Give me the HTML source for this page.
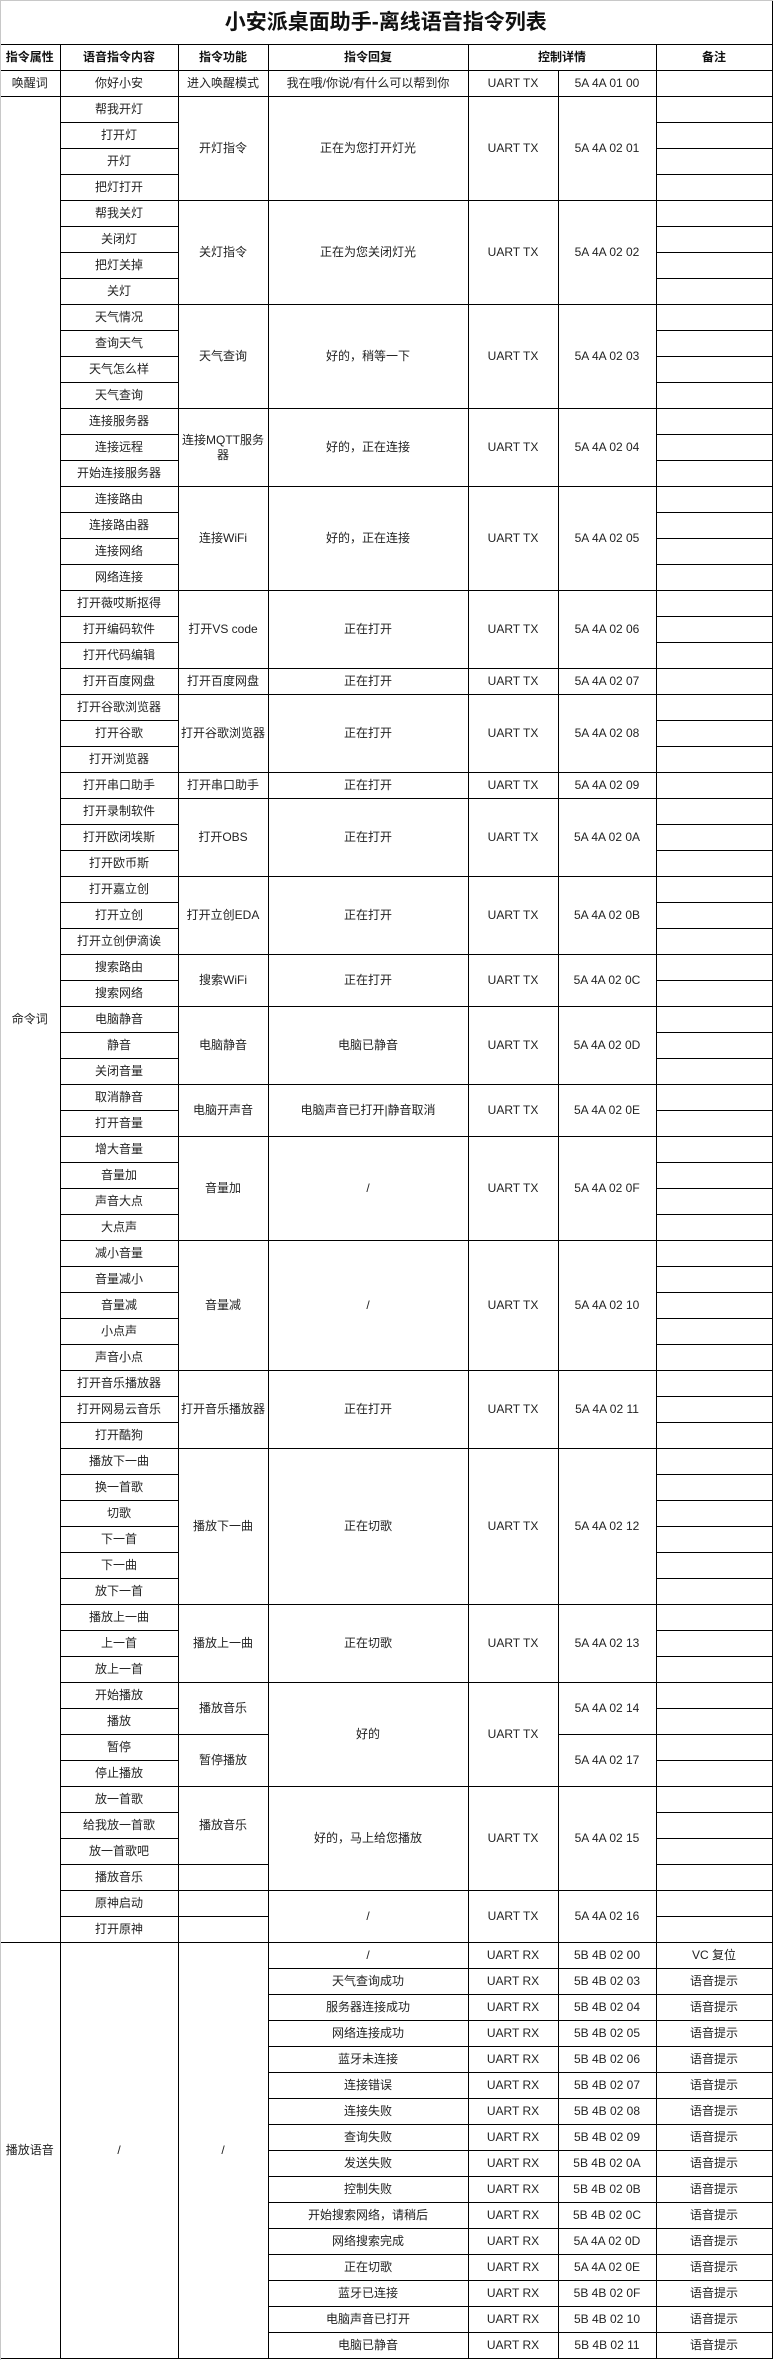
<!DOCTYPE html>
<html><head><meta charset="utf-8">
<style>
html,body{margin:0;padding:0;background:#fff;}
body{width:773px;height:2360px;overflow:hidden;position:relative;}
.lb{position:absolute;left:0;top:0;width:1px;height:2360px;background:#c8c8c8;}
.tb{position:absolute;left:0;top:0;width:773px;height:1px;background:#c8c8c8;}
table{position:absolute;left:0;top:0;border-collapse:collapse;table-layout:fixed;width:772px;
font-family:"Liberation Sans","Noto Sans CJK SC",sans-serif;font-size:12px;color:#222;}
td{border:1px solid #000;height:25px;padding:0 2px;text-align:center;vertical-align:middle;line-height:15px;overflow:hidden;}
tr{height:26px;}
.title td{height:44px;border-top:none;border-left:none;font-size:21px;font-weight:bold;color:#111;}
.h td{font-weight:bold;color:#111;}
td.f{border-left:none;}
</style></head><body>
<table>
<colgroup><col style="width:60px"><col style="width:118px"><col style="width:90px"><col style="width:200px"><col style="width:90px"><col style="width:98px"><col style="width:116px"></colgroup>
<tr class="title"><td colspan="7" style="border-right:1px solid #000">小安派桌面助手-离线语音指令列表</td></tr>
<tr class="h"><td class="f">指令属性</td><td>语音指令内容</td><td>指令功能</td><td>指令回复</td><td colspan="2">控制详情</td><td>备注</td></tr>
<tr><td class="f">唤醒词</td><td>你好小安</td><td>进入唤醒模式</td><td>我在哦/你说/有什么可以帮到你</td><td>UART TX</td><td>5A 4A 01 00</td><td></td></tr>

<tr><td class="f" rowspan="71">命令词</td><td>帮我开灯</td><td rowspan="4">开灯指令</td><td rowspan="4">正在为您打开灯光</td><td rowspan="4">UART TX</td><td rowspan="4">5A 4A 02 01</td><td></td></tr>
<tr><td>打开灯</td><td></td></tr><tr><td>开灯</td><td></td></tr><tr><td>把灯打开</td><td></td></tr>

<tr><td>帮我关灯</td><td rowspan="4">关灯指令</td><td rowspan="4">正在为您关闭灯光</td><td rowspan="4">UART TX</td><td rowspan="4">5A 4A 02 02</td><td></td></tr>
<tr><td>关闭灯</td><td></td></tr><tr><td>把灯关掉</td><td></td></tr><tr><td>关灯</td><td></td></tr>

<tr><td>天气情况</td><td rowspan="4">天气查询</td><td rowspan="4">好的，稍等一下</td><td rowspan="4">UART TX</td><td rowspan="4">5A 4A 02 03</td><td></td></tr>
<tr><td>查询天气</td><td></td></tr><tr><td>天气怎么样</td><td></td></tr><tr><td>天气查询</td><td></td></tr>

<tr><td>连接服务器</td><td rowspan="3">连接MQTT服务器</td><td rowspan="3">好的，正在连接</td><td rowspan="3">UART TX</td><td rowspan="3">5A 4A 02 04</td><td></td></tr>
<tr><td>连接远程</td><td></td></tr><tr><td>开始连接服务器</td><td></td></tr>

<tr><td>连接路由</td><td rowspan="4">连接WiFi</td><td rowspan="4">好的，正在连接</td><td rowspan="4">UART TX</td><td rowspan="4">5A 4A 02 05</td><td></td></tr>
<tr><td>连接路由器</td><td></td></tr><tr><td>连接网络</td><td></td></tr><tr><td>网络连接</td><td></td></tr>

<tr><td>打开薇哎斯抠得</td><td rowspan="3">打开VS code</td><td rowspan="3">正在打开</td><td rowspan="3">UART TX</td><td rowspan="3">5A 4A 02 06</td><td></td></tr>
<tr><td>打开编码软件</td><td></td></tr><tr><td>打开代码编辑</td><td></td></tr>

<tr><td>打开百度网盘</td><td>打开百度网盘</td><td>正在打开</td><td>UART TX</td><td>5A 4A 02 07</td><td></td></tr>

<tr><td>打开谷歌浏览器</td><td rowspan="3">打开谷歌浏览器</td><td rowspan="3">正在打开</td><td rowspan="3">UART TX</td><td rowspan="3">5A 4A 02 08</td><td></td></tr>
<tr><td>打开谷歌</td><td></td></tr><tr><td>打开浏览器</td><td></td></tr>

<tr><td>打开串口助手</td><td>打开串口助手</td><td>正在打开</td><td>UART TX</td><td>5A 4A 02 09</td><td></td></tr>

<tr><td>打开录制软件</td><td rowspan="3">打开OBS</td><td rowspan="3">正在打开</td><td rowspan="3">UART TX</td><td rowspan="3">5A 4A 02 0A</td><td></td></tr>
<tr><td>打开欧闭埃斯</td><td></td></tr><tr><td>打开欧币斯</td><td></td></tr>

<tr><td>打开嘉立创</td><td rowspan="3">打开立创EDA</td><td rowspan="3">正在打开</td><td rowspan="3">UART TX</td><td rowspan="3">5A 4A 02 0B</td><td></td></tr>
<tr><td>打开立创</td><td></td></tr><tr><td>打开立创伊滴诶</td><td></td></tr>

<tr><td>搜索路由</td><td rowspan="2">搜索WiFi</td><td rowspan="2">正在打开</td><td rowspan="2">UART TX</td><td rowspan="2">5A 4A 02 0C</td><td></td></tr>
<tr><td>搜索网络</td><td></td></tr>

<tr><td>电脑静音</td><td rowspan="3">电脑静音</td><td rowspan="3">电脑已静音</td><td rowspan="3">UART TX</td><td rowspan="3">5A 4A 02 0D</td><td></td></tr>
<tr><td>静音</td><td></td></tr><tr><td>关闭音量</td><td></td></tr>

<tr><td>取消静音</td><td rowspan="2">电脑开声音</td><td rowspan="2">电脑声音已打开|静音取消</td><td rowspan="2">UART TX</td><td rowspan="2">5A 4A 02 0E</td><td></td></tr>
<tr><td>打开音量</td><td></td></tr>

<tr><td>增大音量</td><td rowspan="4">音量加</td><td rowspan="4">/</td><td rowspan="4">UART TX</td><td rowspan="4">5A 4A 02 0F</td><td></td></tr>
<tr><td>音量加</td><td></td></tr><tr><td>声音大点</td><td></td></tr><tr><td>大点声</td><td></td></tr>

<tr><td>减小音量</td><td rowspan="5">音量减</td><td rowspan="5">/</td><td rowspan="5">UART TX</td><td rowspan="5">5A 4A 02 10</td><td></td></tr>
<tr><td>音量减小</td><td></td></tr><tr><td>音量减</td><td></td></tr><tr><td>小点声</td><td></td></tr><tr><td>声音小点</td><td></td></tr>

<tr><td>打开音乐播放器</td><td rowspan="3">打开音乐播放器</td><td rowspan="3">正在打开</td><td rowspan="3">UART TX</td><td rowspan="3">5A 4A 02 11</td><td></td></tr>
<tr><td>打开网易云音乐</td><td></td></tr><tr><td>打开酷狗</td><td></td></tr>

<tr><td>播放下一曲</td><td rowspan="6">播放下一曲</td><td rowspan="6">正在切歌</td><td rowspan="6">UART TX</td><td rowspan="6">5A 4A 02 12</td><td></td></tr>
<tr><td>换一首歌</td><td></td></tr><tr><td>切歌</td><td></td></tr><tr><td>下一首</td><td></td></tr><tr><td>下一曲</td><td></td></tr><tr><td>放下一首</td><td></td></tr>

<tr><td>播放上一曲</td><td rowspan="3">播放上一曲</td><td rowspan="3">正在切歌</td><td rowspan="3">UART TX</td><td rowspan="3">5A 4A 02 13</td><td></td></tr>
<tr><td>上一首</td><td></td></tr><tr><td>放上一首</td><td></td></tr>

<tr><td>开始播放</td><td rowspan="2">播放音乐</td><td rowspan="4">好的</td><td rowspan="4">UART TX</td><td rowspan="2">5A 4A 02 14</td><td></td></tr>
<tr><td>播放</td><td></td></tr>
<tr><td>暂停</td><td rowspan="2">暂停播放</td><td rowspan="2">5A 4A 02 17</td><td></td></tr>
<tr><td>停止播放</td><td></td></tr>

<tr><td>放一首歌</td><td rowspan="3">播放音乐</td><td rowspan="4">好的，马上给您播放</td><td rowspan="4">UART TX</td><td rowspan="4">5A 4A 02 15</td><td></td></tr>
<tr><td>给我放一首歌</td><td></td></tr><tr><td>放一首歌吧</td><td></td></tr>
<tr><td>播放音乐</td><td></td><td></td></tr>

<tr><td>原神启动</td><td></td><td rowspan="2">/</td><td rowspan="2">UART TX</td><td rowspan="2">5A 4A 02 16</td><td></td></tr>
<tr><td>打开原神</td><td></td><td></td></tr>

<tr><td class="f" rowspan="16">播放语音</td><td rowspan="16">/</td><td rowspan="16">/</td><td>/</td><td>UART RX</td><td>5B 4B 02 00</td><td>VC 复位</td></tr>
<tr><td>天气查询成功</td><td>UART RX</td><td>5B 4B 02 03</td><td>语音提示</td></tr>
<tr><td>服务器连接成功</td><td>UART RX</td><td>5B 4B 02 04</td><td>语音提示</td></tr>
<tr><td>网络连接成功</td><td>UART RX</td><td>5B 4B 02 05</td><td>语音提示</td></tr>
<tr><td>蓝牙未连接</td><td>UART RX</td><td>5B 4B 02 06</td><td>语音提示</td></tr>
<tr><td>连接错误</td><td>UART RX</td><td>5B 4B 02 07</td><td>语音提示</td></tr>
<tr><td>连接失败</td><td>UART RX</td><td>5B 4B 02 08</td><td>语音提示</td></tr>
<tr><td>查询失败</td><td>UART RX</td><td>5B 4B 02 09</td><td>语音提示</td></tr>
<tr><td>发送失败</td><td>UART RX</td><td>5B 4B 02 0A</td><td>语音提示</td></tr>
<tr><td>控制失败</td><td>UART RX</td><td>5B 4B 02 0B</td><td>语音提示</td></tr>
<tr><td>开始搜索网络，请稍后</td><td>UART RX</td><td>5B 4B 02 0C</td><td>语音提示</td></tr>
<tr><td>网络搜索完成</td><td>UART RX</td><td>5A 4A 02 0D</td><td>语音提示</td></tr>
<tr><td>正在切歌</td><td>UART RX</td><td>5A 4A 02 0E</td><td>语音提示</td></tr>
<tr><td>蓝牙已连接</td><td>UART RX</td><td>5B 4B 02 0F</td><td>语音提示</td></tr>
<tr><td>电脑声音已打开</td><td>UART RX</td><td>5B 4B 02 10</td><td>语音提示</td></tr>
<tr><td>电脑已静音</td><td>UART RX</td><td>5B 4B 02 11</td><td>语音提示</td></tr>
</table>
<div class="lb"></div><div class="tb"></div>
</body></html>
